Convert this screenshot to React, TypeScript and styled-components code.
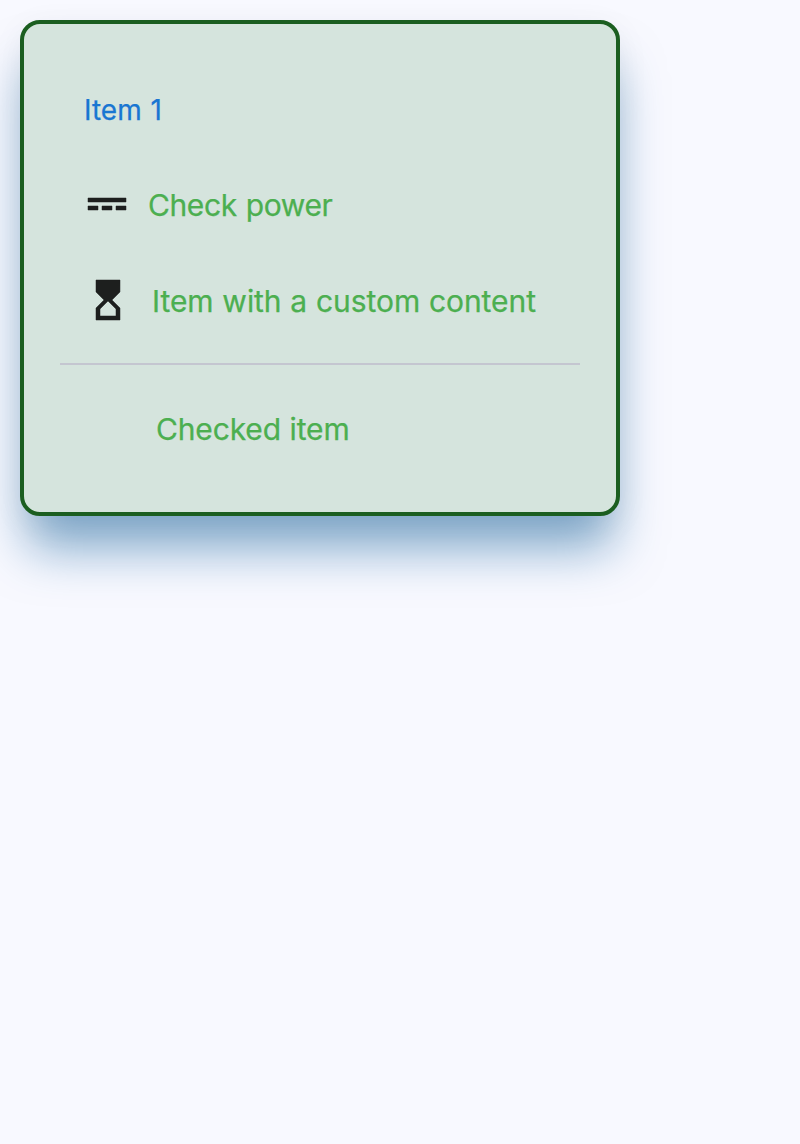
import React from "react";
import styled, { createGlobalStyle } from "styled-components";

const GlobalStyle = createGlobalStyle`
  html { background: #f8f9ff; }
  body { margin: 0; font-family: Inter, "Liberation Sans", sans-serif; }
`;

const Page = styled.main`
  min-height: 1144px;
  padding: 20px;
  box-sizing: border-box;
  background: #f8f9ff;
`;

const Menu = styled.ul`
  width: 600px;
  margin: 0;
  padding: 36px;
  box-sizing: border-box;
  list-style: none;
  border: 4px solid #1b5e20;
  border-radius: 20px;
  background: #d5e4dd;
  box-shadow:
    0 40px 50px -8px rgba(8, 88, 150, 0.5),
    0 8px 34px 0 rgba(0, 0, 0, 0.055);
`;

const MenuItem = styled.li<{ $height?: number; $indent?: number; $gap?: number }>`
  display: flex;
  align-items: center;
  height: ${(p) => p.$height ?? 96}px;
  padding-left: ${(p) => p.$indent ?? 24}px;
  gap: ${(p) => p.$gap ?? 16}px;
  box-sizing: border-box;
  color: #1d1f1e;
`;

const Label = styled.span<{
  $color?: string;
  $size?: number;
  $spacing?: number;
  $wordSpacing?: number;
  $padTop?: number;
  $padBottom?: number;
}>`
  padding-top: ${(p) => p.$padTop ?? 0}px;
  padding-bottom: ${(p) => p.$padBottom ?? 0}px;
  font-size: ${(p) => p.$size ?? 30}px;
  line-height: 40px;
  letter-spacing: ${(p) => p.$spacing ?? 0}px;
  word-spacing: ${(p) => p.$wordSpacing ?? 0}px;
  white-space: nowrap;
  color: ${(p) => p.$color ?? "#4caf50"};
  -webkit-text-stroke: 0.25px currentColor;
`;

const Icon = styled.svg`
  flex: none;
  width: 48px;
  height: 48px;
  fill: currentColor;
  stroke: currentColor;
  stroke-width: 0.25;
`;

const Separator = styled.li`
  height: 2px;
  margin: 14px 0 16px;
  background: #c4c6d0;
`;

export default function App() {
  return (
    <>
      <GlobalStyle />
      <Page>
        <Menu>
          <MenuItem $height={100}>
            <Label $color="#1976d2" $size={28} $wordSpacing={1}>Item 1</Label>
          </MenuItem>
          <MenuItem $height={91}>
            <Icon viewBox="0 0 24 24">
              <path d="M2 8v2h19V8H2zm0 6h5v-2H2v2zm7 0h5v-2H9v2zm7 0h5v-2h-5v2z" />
            </Icon>
            <Label $spacing={-0.4} $wordSpacing={1} $padBottom={2}>Check power</Label>
          </MenuItem>
          <MenuItem $height={98} $gap={20}>
            <Icon viewBox="0 0 24 24">
              <path d="M18 22l-.01-6L14 12l3.99-4.01L18 2H6v6l4 4-4 3.990V22h12zM8 16.500l4-4 4 4V20H8v-3.500z" />
            </Icon>
            <Label $spacing={-0.05} $wordSpacing={0.4} $padTop={2}>Item with a custom content</Label>
          </MenuItem>
          <Separator />
          <MenuItem $height={95} $indent={96}>
            <Label $spacing={-0.15} $wordSpacing={0.4}>Checked item</Label>
          </MenuItem>
        </Menu>
      </Page>
    </>
  );
}
